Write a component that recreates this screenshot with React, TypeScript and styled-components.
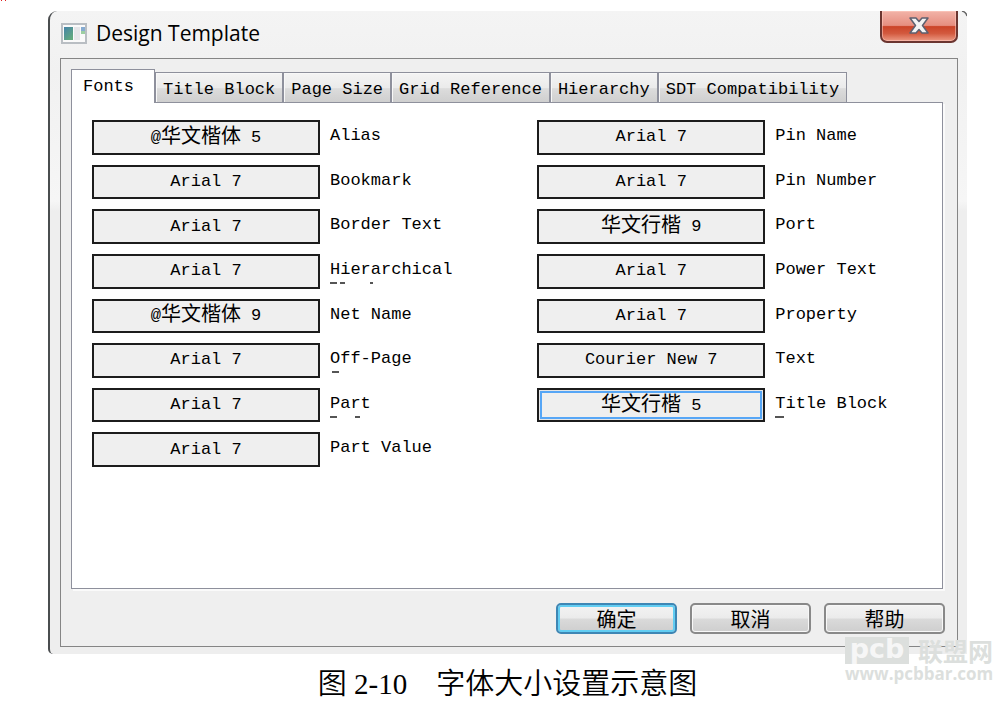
import React, { useState } from "react";
import styled, { createGlobalStyle } from "styled-components";

const mono = `"Liberation Mono", "Noto Sans CJK SC", monospace`;
const cjk = `"Noto Sans CJK SC", sans-serif`;
const line = "#8e909c";

const GlobalStyle = createGlobalStyle`
  *, *::before, *::after { box-sizing: border-box; }
  body { margin: 0; background: #fff; color: #000; font-family: ${mono}; }
  button { font: inherit; color: inherit; margin: 0; padding: 0; }
`;

const Figure = styled.figure`
  position: relative;
  margin: 0;
  padding: 11px 31px 0 48px;
`;

const RevisionMark = styled.svg`
  position: absolute;
  top: 0;
  left: 0;
`;

const Dialog = styled.section`
  position: relative;
  padding: 0 9px 7px 10px;
  border-left: 2px solid #4a4d4f;
  border-radius: 9px 0 0 5px;
  background: linear-gradient(#f4f4f4, #f1f1f1 60px, #f6f6f6 190px, #eeeeee 200px, #eeeeee);
`;

const CornerEdge = styled.svg`
  position: absolute;
  top: 0;
  right: 0;
`;

const TitleBar = styled.header`
  display: flex;
  align-items: flex-start;
  height: 47px;
`;

const AppIcon = styled.svg`
  margin: 12px 9px 0 1px;
  flex: none;
`;

const Title = styled.h1`
  flex: 1;
  margin: 7px 0 0;
  font: 400 21px/30px "Open Sans", sans-serif;
`;

const CloseButton = styled.button`
  display: flex;
  align-items: center;
  justify-content: center;
  width: 78px;
  height: 32px;
  border: 2px solid #6b3530;
  border-top: 0;
  border-radius: 0 0 7px 7px;
  background: linear-gradient(#f2b3a8, #e68e80 48%, #cb4328 52%, #d35a3f 75%, #ec9a84);
  box-shadow: inset 0 0 0 1px rgba(255, 205, 195, 0.55);
`;

const Client = styled.div`
  padding: 10px 14px 12px 10px;
  border: 1px solid #858585;
  background: #efefef;
`;

const TabList = styled.div`
  display: flex;
  align-items: flex-end;
`;

const Tab = styled.button<{ $active: boolean }>`
  position: relative;
  height: ${(p) => (p.$active ? 34 : 30)}px;
  padding: ${(p) => (p.$active ? "0 20px 0 11px" : "4px 7px 0")};
  margin-bottom: ${(p) => (p.$active ? -1 : 0)}px;
  border: 1px solid ${line};
  border-bottom: 0;
  background: ${(p) => (p.$active ? "#fff" : "linear-gradient(#f4f4f4, #ebebeb 50%, #dcdcdc 54%, #cfcfcf)")};
  box-shadow: ${(p) => (p.$active ? "none" : "inset 1px 1px 0 #f8f8f8")};
  font-size: 17px;
  line-height: 24px;
  white-space: nowrap;
`;

const Panel = styled.div`
  min-height: 487px;
  padding: 17px 0 20px 20px;
  border: 1px solid ${line};
  background: #fff;
  box-shadow: 2px 2px 0 #fafafa;
`;

const FontGrid = styled.div`
  display: grid;
  grid-template-columns: 11fr 10fr;
  grid-template-rows: repeat(8, 1fr);
  grid-auto-flow: column;
  row-gap: 10px;
  min-height: 347px;
`;

const FontRow = styled.div`
  display: flex;
  gap: 10px;
`;

const FontButton = styled.button<{ $focused?: boolean }>`
  width: 228px;
  border: 2px solid #1c1c1c;
  background: #efefef;
  box-shadow: ${(p) => (p.$focused ? "inset 0 0 0 1px #e6e6e6, inset 0 0 0 3px #56a6f6" : "none")};
  font-size: 17px;
  line-height: 24px;
  white-space: nowrap;
`;

const Han = styled.span`
  font-family: ${cjk};
  font-size: 20px;
  line-height: 20px;
  vertical-align: -1px;
`;

const FontLabel = styled.label`
  position: relative;
  font-size: 17px;
  line-height: 31px;
  white-space: nowrap;
`;

const Remnant = styled.svg`
  position: absolute;
  left: 0;
  top: 28px;
`;

const Actions = styled.footer`
  display: flex;
  justify-content: flex-end;
  gap: 13px;
  margin: 14px -2px 0 0;
`;

const ActionButton = styled.button<{ $primary?: boolean }>`
  width: 121px;
  height: 31px;
  border: 2px solid ${(p) => (p.$primary ? "#3e86b4" : "#898989")};
  border-radius: 5px;
  background: linear-gradient(#f3f3f3, #ebebeb 48%, #dadada 52%, #cecece);
  box-shadow: inset 0 0 0 ${(p) => (p.$primary ? "2px #62cdf2" : "1px #f8f8f8")};
  font: 400 20px/24px ${cjk};
`;

const Caption = styled.figcaption`
  margin-top: 15px;
  height: 32px;
  text-align: center;
  white-space: pre;
  font: 350 29px/30px "Liberation Serif", "Noto Sans CJK SC", serif;
`;

const Watermark = styled.div`
  position: absolute;
  right: 5px;
  top: 636px;
  width: 148px;
  color: #dcdfdd;
  pointer-events: none;
`;

const WatermarkTop = styled.div`
  display: flex;
  justify-content: space-between;
  align-items: center;
  height: 29px;
  font: 700 25px/29px ${cjk};
`;

const WatermarkLogo = styled.span`
  width: 64px;
  height: 27px;
  background: #dcdfdd;
  color: #f6f6f6;
  text-align: center;
  font: 700 27px/24px "DejaVu Sans", sans-serif;
`;

const WatermarkUrl = styled.div`
  font: 700 17px/18px "Open Sans", sans-serif;
`;

const tabs = ["Fonts", "Title Block", "Page Size", "Grid Reference", "Hierarchy", "SDT Compatibility"];

type Entry = { name: string; at?: string; han?: string; value: string; marks?: [number, number][] };

const entries: Entry[] = [
  { name: "Alias", at: "@", han: "华文楷体", value: " 5" },
  { name: "Bookmark", value: "Arial 7" },
  { name: "Border Text", value: "Arial 7" },
  { name: "Hierarchical", value: "Arial 7", marks: [[0, 7], [10, 5], [40, 3]] },
  { name: "Net Name", at: "@", han: "华文楷体", value: " 9" },
  { name: "Off-Page", value: "Arial 7", marks: [[2, 7]] },
  { name: "Part", value: "Arial 7", marks: [[0, 7], [25, 5]] },
  { name: "Part Value", value: "Arial 7" },
  { name: "Pin Name", value: "Arial 7" },
  { name: "Pin Number", value: "Arial 7" },
  { name: "Port", han: "华文行楷", value: " 9" },
  { name: "Power Text", value: "Arial 7" },
  { name: "Property", value: "Arial 7" },
  { name: "Text", value: "Courier New 7" },
  { name: "Title Block", han: "华文行楷", value: " 5", marks: [[0, 9]] },
];

export default function App() {
  const [active, setActive] = useState(0);

  return (
    <Figure>
      <GlobalStyle />
      <RevisionMark width="6" height="1" aria-hidden="true">
        <path d="M1 0h1v1h-1zM5 0h1v1h-1z" fill="#e02020" />
      </RevisionMark>
      <Dialog aria-label="Design Template">
        <CornerEdge width="6" height="6" viewBox="0 0 6 6" aria-hidden="true">
          <path d="M1 0h5v5Q5 1 1 0z" fill="#fff" />
          <path d="M1 0Q5 1 6 5" fill="none" stroke="#666" strokeWidth="1.5" />
        </CornerEdge>
        <TitleBar>
          <AppIcon width="26" height="21" viewBox="0 0 26 21" aria-hidden="true">
            <defs>
              <linearGradient id="paneFill" x1="0" y1="0" x2="0.7" y2="1">
                <stop offset="0" stopColor="#4583a9" />
                <stop offset="1" stopColor="#62aa7d" />
              </linearGradient>
            </defs>
            <rect x="1" y="1" width="24" height="19" fill="#fafafa" stroke="#b9bec3" strokeWidth="2" />
            <rect x="3" y="4" width="9" height="13" fill="url(#paneFill)" />
            <rect x="13" y="4" width="6" height="13" fill="#e6e6e9" />
            <rect x="20" y="4" width="4" height="4" fill="#86abd1" />
            <rect x="20" y="8" width="4" height="3" fill="#9ccfa2" />
          </AppIcon>
          <Title>Design Template</Title>
          <CloseButton aria-label="Close">
            <svg width="20" height="18" viewBox="0 0 20 18" aria-hidden="true">
              <path
                d="M1 1h6l3 3.500L13 1h6l-5.500 7.500L19 16h-6l-3-3.500L7 16H1l5.500-7.500z"
                fill="#f3f3f3"
                stroke="#5d6070"
                strokeWidth="1.500"
                strokeLinejoin="round"
              />
            </svg>
          </CloseButton>
        </TitleBar>
        <Client>
          <TabList role="tablist">
            {tabs.map((name, i) => (
              <Tab key={name} role="tab" aria-selected={i === active} $active={i === active} onClick={() => setActive(i)}>
                {name}
              </Tab>
            ))}
          </TabList>
          <Panel role="tabpanel">
            <FontGrid>
              {entries.map((e, i) => (
                <FontRow key={e.name}>
                  <FontButton id={`font-${i}`} $focused={i === entries.length - 1}>
                    {e.at}
                    {e.han && <Han>{e.han}</Han>}
                    {e.value}
                  </FontButton>
                  <FontLabel htmlFor={`font-${i}`}>
                    {e.name}
                    {e.marks && (
                      <Remnant width="50" height="2" aria-hidden="true">
                        {e.marks.map(([x, w]) => (
                          <rect key={x} x={x} width={w} height="2" fill="#555" />
                        ))}
                      </Remnant>
                    )}
                  </FontLabel>
                </FontRow>
              ))}
            </FontGrid>
          </Panel>
          <Actions>
            <ActionButton $primary>确定</ActionButton>
            <ActionButton>取消</ActionButton>
            <ActionButton>帮助</ActionButton>
          </Actions>
        </Client>
      </Dialog>
      <Caption>图 2-10　字体大小设置示意图</Caption>
      <Watermark>
        <WatermarkTop>
          <WatermarkLogo>pcb</WatermarkLogo>
          <span>联盟网</span>
        </WatermarkTop>
        <WatermarkUrl>www.pcbbar.com</WatermarkUrl>
      </Watermark>
    </Figure>
  );
}
